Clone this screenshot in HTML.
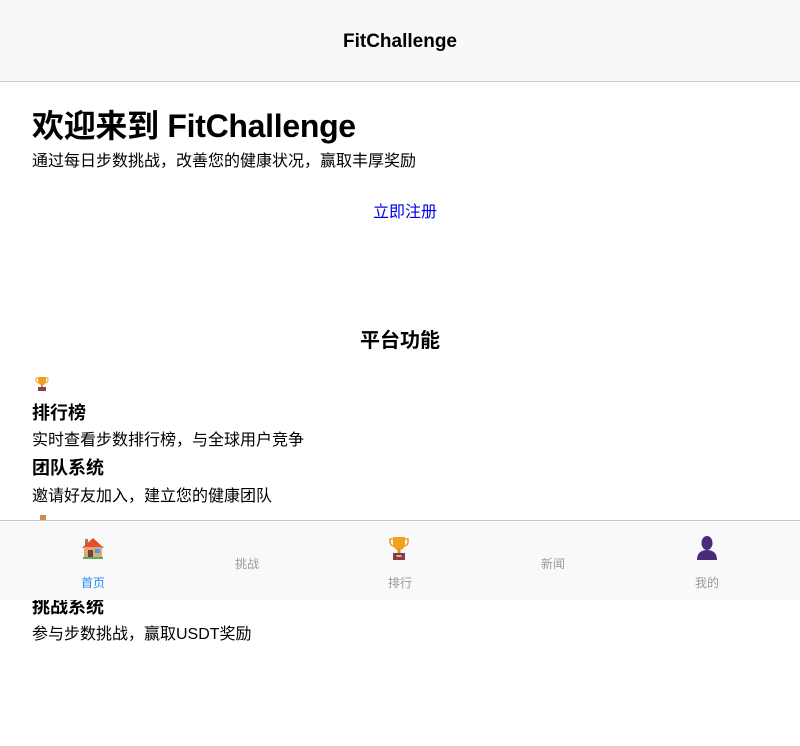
<!DOCTYPE html>
<html><head><meta charset="utf-8">
<style>
*{margin:0;padding:0;box-sizing:border-box}
html,body{width:800px;height:746px;overflow:hidden;background:#fff;font-family:"Liberation Sans","Noto Sans CJK SC",sans-serif;color:#000}
.a{position:absolute;white-space:nowrap}
.hdr{position:absolute;left:0;top:0;width:800px;height:82px;background:#f8f8f8;border-bottom:1px solid #ccc}
.nav{position:absolute;left:0;top:520px;width:800px;height:80px;background:#f9f9f9;border-top:1px solid #c8c8c8}
.lbl{position:absolute;font-size:12px;color:#999;transform:translateX(-50%)}
.b{font-weight:bold}
</style></head><body>
<div class="hdr"></div>
<div class="a b" style="left:0;width:800px;text-align:center;top:30px;font-size:19px;line-height:24px">FitChallenge</div>
<div class="a b" style="left:32px;top:106px;font-size:32px;line-height:40px;letter-spacing:-0.3px">欢迎来到 FitChallenge</div>
<div class="a" style="left:32px;top:151px;font-size:16px;line-height:22px">通过每日步数挑战，改善您的健康状况，赢取丰厚奖励</div>
<div class="a" style="left:373px;top:202px;font-size:16px;line-height:22px;color:#0000ee">立即注册</div>
<div class="a b" style="left:0;width:800px;text-align:center;top:328px;font-size:20px;line-height:26px">平台功能</div>
<svg class="a" style="left:35px;top:376px" width="14" height="16" viewBox="0 0 14 16"><path d="M3 1h8v4a4 4 0 0 1-8 0z" fill="#f0a020"/><path d="M3 2H1v2a3 3 0 0 0 3 3M11 2h2v2a3 3 0 0 1-3 3" stroke="#f0a020" stroke-width="1" fill="none"/><rect x="6" y="8" width="2" height="3" fill="#e09010"/><rect x="3" y="11" width="8" height="4" fill="#8a4050"/></svg>
<div class="a b" style="left:32px;top:401px;font-size:18px;line-height:24px">排行榜</div>
<div class="a" style="left:32px;top:430px;font-size:16px;line-height:21px">实时查看步数排行榜，与全球用户竞争</div>
<div class="a b" style="left:32px;top:456px;font-size:18px;line-height:24px">团队系统</div>
<div class="a" style="left:32px;top:486px;font-size:16px;line-height:21px">邀请好友加入，建立您的健康团队</div>
<div class="a b" style="left:32px;top:595px;font-size:18px;line-height:24px">挑战系统</div>
<div class="a" style="left:32px;top:624px;font-size:16px;line-height:21px">参与步数挑战，赢取USDT奖励</div>
<svg class="a" style="left:38px;top:514px" width="10" height="6"><rect x="2" y="1" width="6" height="5" fill="#c89050"/></svg>
<div class="nav"></div>
<svg class="a" style="left:80px;top:536px" width="26" height="24" viewBox="0 0 26 24"><rect x="5" y="3" width="3" height="6" fill="#c07040"/><path d="M13 2L2 12h22z" fill="#e05030"/><rect x="4" y="11" width="18" height="11" fill="#e0a878"/><rect x="8" y="14" width="5" height="8" fill="#7a4030"/><rect x="15" y="13" width="5" height="4" fill="#40a0f0"/><rect x="3" y="21" width="20" height="2" fill="#50b060"/></svg>
<svg class="a" style="left:388px;top:535px" width="22" height="26" viewBox="0 0 22 26"><path d="M5 2h12v7a6 6 0 0 1-12 0z" fill="#f2a020"/><path d="M5 4H2v3a4 4 0 0 0 4 4M17 4h3v3a4 4 0 0 1-4 4" stroke="#f2a020" stroke-width="1.6" fill="none"/><rect x="9.5" y="14" width="3" height="4" fill="#e09010"/><rect x="5" y="18" width="12" height="7" fill="#8a3a50"/><rect x="8.5" y="20" width="5" height="2" fill="#f0c040"/></svg>
<svg class="a" style="left:695px;top:535px" width="24" height="26" viewBox="0 0 24 26"><ellipse cx="12" cy="8" rx="5.5" ry="7" fill="#4a2a7a"/><path d="M2 25c0-7 4-10 10-10s10 3 10 10z" fill="#4a2a7a"/></svg>
<div class="lbl" style="left:93px;top:574px;color:#1e90ff">首页</div>
<div class="lbl" style="left:247px;top:555px">挑战</div>
<div class="lbl" style="left:400px;top:574px">排行</div>
<div class="lbl" style="left:553px;top:555px">新闻</div>
<div class="lbl" style="left:707px;top:574px">我的</div>
</body></html>
